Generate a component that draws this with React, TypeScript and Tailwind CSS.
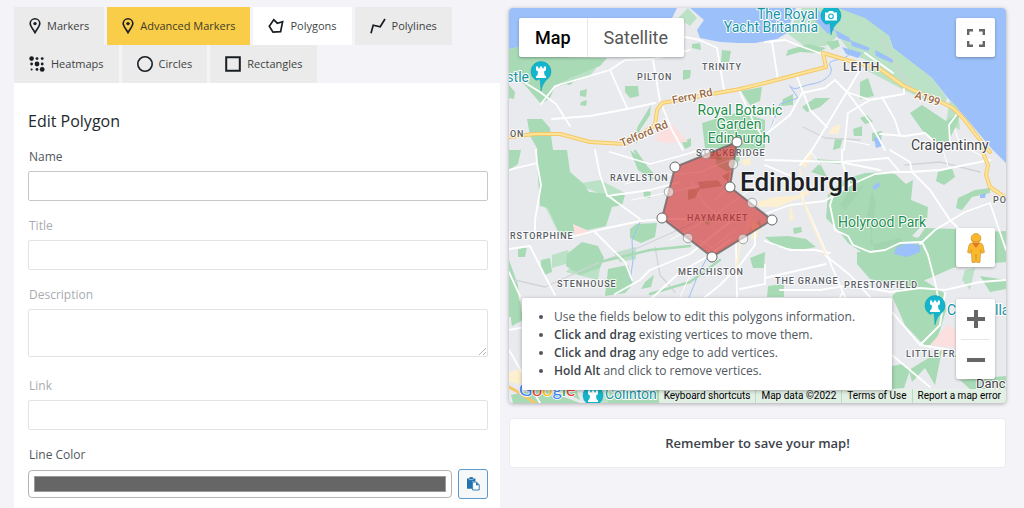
import { useState, type ReactNode } from "react";

const line = { fill: "none", stroke: "currentColor", strokeWidth: 1.6 } as const;

const PinIcon = () => (
  <svg className="h-4 w-3 shrink-0" viewBox="0 0 12 16" {...line}>
    <path d="M6 14.6C4.6 11.6 1.2 8.6 1.2 5.6a4.8 4.8 0 0 1 9.6 0c0 3-3.4 6-4.8 9z" />
    <circle cx="6" cy="5.6" r="1.7" fill="currentColor" stroke="none" />
  </svg>
);

const PolygonIcon = () => (
  <svg className="h-4 w-4 shrink-0" viewBox="0 0 16 16" {...line} strokeWidth={1.7}>
    <path d="M5.7 1.7 9.3 5.2 14.6 3.6 12.6 13.6 5 14.2 1.3 8.2z" />
  </svg>
);

const PolylineIcon = () => (
  <svg className="h-4 w-4 shrink-0" viewBox="0 0 16 16" {...line} strokeWidth={1.7}>
    <path d="M1 15.2 3.2 7.2 10.2 8.8 15 1" />
  </svg>
);

const HeatmapIcon = () => (
  <svg className="h-4 w-4 shrink-0" viewBox="0 0 16 16" fill="currentColor">
    <circle cx="2.6" cy="2.6" r="2.3" />
    <circle cx="8" cy="2.6" r="1.4" />
    <circle cx="13.2" cy="2.6" r="1.4" />
    <circle cx="2.6" cy="8" r="1.4" />
    <circle cx="8" cy="8" r="2.4" />
    <circle cx="13.2" cy="8" r="1.4" />
    <circle cx="2.6" cy="13.4" r="1" />
    <circle cx="8" cy="13.4" r="1.4" />
    <circle cx="13.2" cy="13.4" r="2.4" />
  </svg>
);

const CircleIcon = () => (
  <svg className="h-4 w-4 shrink-0" viewBox="0 0 16 16" {...line}>
    <circle cx="8" cy="8" r="7.2" />
  </svg>
);

const SquareIcon = () => (
  <svg className="h-4 w-4 shrink-0" viewBox="0 0 16 16" {...line} strokeWidth={2}>
    <path d="M1.2 1.2h13.6v13.6H1.2z" />
  </svg>
);

const tabs: { name: string; icon: ReactNode }[] = [
  { name: "Markers", icon: <PinIcon /> },
  { name: "Advanced Markers", icon: <PinIcon /> },
  { name: "Polygons", icon: <PolygonIcon /> },
  { name: "Polylines", icon: <PolylineIcon /> },
  { name: "Heatmaps", icon: <HeatmapIcon /> },
  { name: "Circles", icon: <CircleIcon /> },
  { name: "Rectangles", icon: <SquareIcon /> },
];

function Tabs() {
  const [active, setActive] = useState("Polygons");
  return (
    <nav className="flex flex-wrap gap-x-[3px]">
      {tabs.map((t) => {
        const tone =
          t.name === active
            ? "bg-white"
            : t.name === "Advanced Markers"
              ? "bg-[#facd48]"
              : "bg-[#ebebeb]";
        return (
          <button
            key={t.name}
            type="button"
            onClick={() => setActive(t.name)}
            className={`flex h-[38px] items-center gap-[6px] px-[15px] text-[11px] text-[#191e23] ${tone}`}
          >
            {t.icon}
            <span className="opacity-85">{t.name}</span>
          </button>
        );
      })}
    </nav>
  );
}

function Field({ id, label, muted, children }: { id: string; label: string; muted?: boolean; children: ReactNode }) {
  return (
    <div className={`flex flex-col gap-1 ${muted ? "opacity-50" : ""}`}>
      <label htmlFor={id} className="px-px text-xs leading-5 text-[#50575e]">
        {label}
      </label>
      {children}
    </div>
  );
}

const box = "w-full rounded-xs border border-[#c6c8ca] bg-white px-2 text-xs text-[#2c3338] outline-none";

function Form() {
  const [color, setColor] = useState("#666666");
  return (
    <form className="flex-1 bg-white pt-6 pr-3 pb-3 pl-[14px]">
      <h2 className="text-base leading-7 font-medium text-[#23282d]">Edit Polygon</h2>
      <div className="flex flex-col gap-[15px] pt-3">
        <Field id="name" label="Name">
          <input id="name" type="text" className={`${box} h-[30px]`} />
        </Field>
        <Field id="title" label="Title" muted>
          <input id="title" type="text" className={`${box} h-[30px]`} />
        </Field>
        <Field id="description" label="Description" muted>
          <textarea id="description" className={`${box} mb-1 h-12 resize-y`} />
        </Field>
        <Field id="link" label="Link" muted>
          <input id="link" type="text" className={`${box} h-[30px]`} />
        </Field>
        <Field id="color" label="Line Color">
          <div className="flex items-center gap-[6px]">
            <input
              id="color"
              type="color"
              value={color}
              onChange={(e) => setColor(e.target.value)}
              className="h-7 min-w-0 flex-1 rounded-sm border border-[#b4b4b6] bg-white p-[5px] [&::-webkit-color-swatch]:rounded-none [&::-webkit-color-swatch]:border-[#9a9a9a] [&::-webkit-color-swatch-wrapper]:p-0"
            />
            <button
              type="button"
              aria-label="Paste"
              className="flex size-[30px] items-center justify-center rounded-[3px] border border-[#5b9bd0] bg-[#f6f7f7]"
            >
              <svg className="size-[14px]" viewBox="0 0 14 14">
                <path d="M1 1.4h2.2a2 1.4 0 0 1 4 0h2.2v3H6v7.4H1z" fill="#2271b1" />
                <path d="M3 2.6h4.2" stroke="#b9d4ea" strokeWidth=".8" />
                <path d="M6.6 5h3.8L13.2 7.8V13H6.6z" fill="#fff" stroke="#2271b1" strokeWidth=".9" />
                <path d="M10 5v3.2h3.2z" fill="#2271b1" />
              </svg>
            </button>
          </div>
        </Field>
      </div>
    </form>
  );
}

const greens = [
  "M509 49 530 44 560 57 607 58 600 66 570 78 555 86 550 98 541 104 524 84 509 76z",
  "M561 83 575 80 570 85z M580 91 587 89 586 97 580 96z M581 102 587 100 586 106 580 105z",
  "M625 86 638 86 639 96 630 98 625 92z M683 70 691 70 690 78 683 80z M692 44 700 43 701 50 692 48z",
  "M722 50 731 51 729 62 721 62z M741 91 762 87 760 101 750 105z",
  "M509 85 515 92 514 99 509 98z M527 119 542 119 550 128 553 150 538 150 530 136z",
  "M651 105 650 115 640 130 637 143 632 142 638 126z M682 142 691 138 691 146 685 149z",
  "M702 123 725 116 740 112 765 120 765 150 705 148z",
  "M509 150 521 150 518 164 509 170z",
  "M536 150 567 150 570 172 584 184 589 192 625 195 622 205 612 207 606 226 575 233 560 235 548 208 540 206z",
  "M630 150 640 158 655 175 653 180 638 170z M643 190 651 192 650 198 644 197z",
  "M567 254 582 242 598 246 604 258 600 268 580 275 566 266z M518 249 527 247 525 257 518 257z",
  "M541 260 550 258 552 272 545 275 541 269z M636 224 657 223 655 237 641 243 630 238 630 229z",
  "M608 269 628 265 633 284 625 293 605 296z M645 282 654 275 651 287 641 289z M509 260 518 285 520 315 509 317z",
  "M860 82 868 78 874 96 860 99z M783 99 793 94 793 105 781 106z M802 107 815 98 830 98 820 107 807 112z",
  "M853 129 862 126 862 136 854 136z M860 118 867 115 873 122 865 124z M872 133 882 131 881 143 872 141z M835 139 843 138 840 148 833 150z",
  "M910 113 922 105 946 121 960 112 957 124 948 142 935 142 922 130z",
  "M828 194 845 179 865 173 885 172 895 174 906 184 913 180 911 200 928 207 927 220 912 236 922 240 914 248 890 258 870 258 848 243 838 230 826 218z",
  "M857 252 880 252 900 243 919 237 925 228 956 229 985 232 1006 231 1006 262 955 267 930 278 912 285 888 283 870 279 857 264z",
  "M765 237 788 236 806 239 816 247 800 250 775 246z M793 228 801 227 802 232 794 234z",
  "M938 172 952 168 955 177 944 185 936 181z M956 208 958 198 975 190 990 188 990 193 972 197 962 210z M980 276 1006 280 1006 289 990 292z",
  "M811 172 820 163 827 177z M816 159 842 161 842 164 815 162z",
  "M750 258 765 252 764 268 753 268z M768 286 784 284 784 297 767 297z",
  "M892 296 904 285 922 279 944 293 946 310 940 330 935 345 924 345 905 325z M909 370 930 357 942 350 935 385 925 368 912 382z M892 366 903 364 910 370 904 388 892 389z",
  "M960 380 1006 376 1006 403 985 403z M509 306 520 300 523 320 512 326z",
  "M511 395 540 388 580 403 513 403z M560 390 575 386 580 400z M610 390 660 385 662 403 608 403z M662 388 1006 390 1006 403 662 403z",
  "M716 152 737 148 740 160 728 172 716 165z M748 231 760 220 761 226z M700 217 712 219 708 226z",
  "M788 50 808 44 826 48 818 53 800 52 786 56z M826 42 838 40 840 46 832 50z",
];

const lightGreens = [
  "M787 33 802 8 838 8 865 18 889 36 893 48 932 78 947 98 945 104 925 100 900 88 866 70 880 66 852 54 838 36 826 46 804 46z",
  "M576 184 600 180 625 193 606 196z M540 198 556 190 575 232 560 236 548 212z M578 259 600 268 598 280 566 272z",
  "M552 255 568 250 572 262 552 268z M614 253 636 247 636 259 620 262z",
  "M918 240 955 232 955 268 935 266 918 256z M965 270 975 268 970 290 962 280z M904 300 924 292 944 308 940 330 926 346 912 331z",
  "M678 18 688 8 697 18 690 26z M573 70 584 62 602 60 590 76 560 86z",
  "M950 100 958 108 960 130 946 122z M600 384 625 384 640 403 600 403z",
];

const waters = [
  "M509 8H677L672 18 620 40 540 44 509 49z",
  "M690 8H796L790 24 787 33 777 39 755 43 738 43 720 42 700 38 697 30 704 20z",
  "M836 8H1006V163L992 149 965 117 947 97 932 78 893 48 889 36 865 19z",
  "M811 16 818 10 835 30 828 34z M835 30 850 38 850 42 838 38z M850 40 870 48 868 51 852 46z M875 50 894 60 892 63 876 56z M842 47 862 53 858 58 846 54z",
  "M896 247 905 243 920 245 920 252 907 257 894 254z M872 187 879 182 880 186 874 190z M874 138 880 136 882 146 876 148z M980 195 986 193 985 198 980 198z M625 60 630 59 630 61z",
];

const roads = [
  "M519 79 540 92 556 104 570 126 M541 104 555 86 610 70 625 60 653 59 690 50 M610 70 627 108 M552 119 590 116 627 109 655 103",
  "M653 60 660 101 672 130 683 150 M685 37 700 40 717 48 724 90 M739 90 755 125 765 140",
  "M765 42 785 40 800 46 822 54 M772 42 778 80 M797 77 810 110 827 127 M835 80 847 92 870 100 904 94 904 86 M893 73 865 53",
  "M860 70 845 95 830 120 812 150 800 165 M835 80 825 88 802 93 790 115 765 135 M847 92 870 122 885 150 M870 100 848 113 844 150",
  "M882 97 895 120 900 136 M880 134 905 136 925 133 935 142 M957 114 949 125 950 143",
  "M509 170 537 163 536 150 M537 163 541 185 535 220 535 238 M509 249 530 246 545 276 555 295 M509 237 545 238 575 236 603 229 640 221 665 219 700 219",
  "M595 150 600 175 607 195 640 219 M607 196 650 190 680 182 M595 232 625 262 632 280 M610 152 650 164 680 156 700 150",
  "M615 294 640 280 650 270 690 254 707 240 730 222 M650 300 680 272 705 258 730 240 M509 272 520 296",
  "M755 230 755 245 740 265 720 285 705 297 M736 243 737 297 M740 289 765 284 765 265",
  "M765 165 800 180 803 200 812 220 830 262 845 297 M765 214 790 205 825 201 850 185 842 162 888 158",
  "M842 162 842 150 M888 158 900 172 M765 160 840 162 880 170 M765 241 790 250 815 250 830 253 M825 255 850 275 870 297",
  "M895 172 875 174 850 185 835 190 830 205 835 230 848 236 853 245 870 252 885 250 900 243 922 242 928 255 M890 150 910 162 912 172 930 190 950 220 970 240 990 265 M910 172 940 170 990 160",
  "M912 172 895 172 M920 244 935 230 965 212 990 203 M928 255 935 282 938 297 M780 290 820 290 850 285 890 292 920 288 945 290 980 282 1006 280 M765 278 826 264",
  "M945 293 940 325 920 345 M892 312 920 345 950 350 M892 355 930 387 M509 330 525 327 M509 350 540 403 M842 293 835 310 M990 203 1006 250",
];

const thinRoads = [
  "M625 184 655 176 700 172 735 158 M632 200 680 190 720 180 M670 240 715 215 750 190 760 180",
  "M700 240 712 248 735 230 M715 200 728 188 M690 180 705 205 725 220 M765 105 775 120 770 130",
  "M810 150 820 165 M845 140 870 145 M955 130 960 145 990 160 M948 166 943 150 M690 275 680 297",
];

const highways = [
  "M509 137 535 134 560 134 590 142 625 144 640 135 655 125 657 110 662 103 690 98 740 89 765 83 826 67 823 53 850 61 880 69 904 86 945 104 953 108 963 118 980 140 990 152",
  "M982 150 988 165 986 175 990 187 1006 198",
];

type Label = [text: string, x: number, y: number];

const districts: Label[] = [
  ["PILTON", 637, 80],
  ["TRINITY", 702, 70],
  ["RAVELSTON", 610, 181],
  ["RSTORPHINE", 510, 239],
  ["STENHOUSE", 557, 287],
  ["MERCHISTON", 678, 275],
  ["STOCKBRIDGE", 696, 156],
  ["HAYMARKET", 687, 221],
  ["THE GRANGE", 775, 284],
  ["PRESTONFIELD", 844, 288],
  ["LITTLE FRA", 906, 357],
  ["ON", 510, 137],
  ["PO", 993, 203],
];

const outer: [number, number][] = [
  [737, 142],
  [675, 167],
  [662, 218],
  [712, 257],
  [772, 220],
  [730, 187],
];
const middle: [number, number][] = [
  [706, 154],
  [669, 192],
  [688, 238],
  [743, 239],
  [752, 203],
  [733, 164],
];

function Poi({ x, y, castle }: { x: number; y: number; castle?: boolean }) {
  return (
    <g transform={`translate(${x} ${y})`}>
      <path d="M0 19C-1-1-2 11-6 7.500A10 10 0 1 1 6 7.500C2 11 1 15 0 19z" fill="#12b5cb" stroke="#0e9bb0" strokeWidth=".5" />
      {castle ? (
        <path d="M-5-5.500h2.200v1.800h1.600v-1.800h2.400v1.800h1.600v-1.800H5v3.800L3-.5l.5 3.500L5 4.500V6H-5V4.500L-3.500 3-3-.5-5-1.700z" fill="#fff" />
      ) : (
        <>
          <path d="M-6-3.500h3L-2-5h4l1 1.500h3v8H-6z" fill="#fff" />
          <circle r="2.300" cy=".3" fill="none" stroke="#12b5cb" strokeWidth="1.200" />
        </>
      )}
    </g>
  );
}

function MapDrawing() {
  return (
    <svg
      className="absolute inset-0 h-full w-full font-[Roboto,sans-serif]"
      viewBox="509 8 497 395"
      preserveAspectRatio="xMidYMid slice"
    >
      <path d="M509 8h497v395H509z" fill="#e8eaed" />
      {waters.slice(0, 3).map((d) => (
        <path key={d} d={d} fill="#9cc0f9" />
      ))}
      {lightGreens.map((d) => (
        <path key={d} d={d} fill="#bbe2c6" />
      ))}
      {greens.map((d) => (
        <path key={d} d={d} fill="#a8dab5" />
      ))}
      {waters.slice(3).map((d) => (
        <path key={d} d={d} fill="#9cc0f9" />
      ))}
      <path d="M660 130 672 124 688 142 665 143 655 140z M573 224 589 231 587 235 575 236z M948 324 958 332 956 348 930 345z" fill="#fbe0df" />
      <path d="M742 160 750 158 751 164 744 166z M757 202 775 197 796 196 806 190 810 194 790 202 778 207 760 207z M790 203 794 220 789 221z M801 165 808 152 813 154 805 168z M833 127 841 124 838 134 828 134z M752 220 760 226 757 238 751 240z M509 372 524 368 524 385 509 382z" fill="#fdf0d0" />
      <path d="M867 215 872 190 876 205 870 245 900 238 905 246 875 252z M840 205 850 190 865 185 845 210z" fill="#9ccfa9" opacity=".5" />
      <g fill="none" strokeLinecap="round" strokeLinejoin="round">
        <path d="M790 86C795 92 800 86 812 84S835 74 830 66 850 62 852 50 M790 86 798 98 780 104 770 130" stroke="#9cc0f9" strokeWidth="1" />
        <path d="M700 270 688 300 M640 222 632 240 633 260 630 282 M707 258 695 280" stroke="#9cc0f9" strokeWidth="1" />
        <path d="M515 280 545 287 600 262 640 247 700 220 730 213 M655 247 660 275 675 292 M880 37 900 72 912 88 M905 165 940 162 980 172 M803 127 825 138 860 140" stroke="#d2d4d8" strokeWidth="1.300" />
        <path d="M635 151 645 165 M600 262 650 250 690 246 M650 294 690 282 720 260" stroke="#a8dab5" strokeWidth="2.500" />
        {thinRoads.map((d) => (
          <path key={d} d={d} stroke="#fff" strokeWidth="1" />
        ))}
        {roads.map((d) => (
          <path key={d} d={d} stroke="#fff" strokeWidth="1.800" />
        ))}
        <path d="M736 270 740 244 752 215 M800 170 802 198 815 230 826 255" stroke="#fdf1d2" strokeWidth="2" />
        {highways.map((d) => (
          <path key={d} d={d} stroke="#f6c766" strokeWidth="4" />
        ))}
        {highways.map((d) => (
          <path key={d} d={d} stroke="#fde49b" strokeWidth="2.200" />
        ))}
        <path d="M509 387 520 393 535 403" stroke="#f6c766" strokeWidth="3" />
      </g>

      <g stroke="#fff" strokeWidth="2" strokeLinejoin="round" className="[&_text]:[paint-order:stroke]">
        <g fill="#5b6066" fontSize="9" fontWeight="500" letterSpacing=".9" strokeOpacity=".8">
          {districts.map(([text, x, y]) => (
            <text key={text} x={x} y={y}>
              {text}
            </text>
          ))}
        </g>
        <text x="843" y="71" fontSize="12" fontWeight="500" letterSpacing="1" fill="#4a4e53">LEITH</text>
        <g fill="#9a6a45" fontSize="11" fontWeight="500">
          <text transform="translate(673 104) rotate(-12)">Ferry Rd</text>
          <text transform="translate(622 147) rotate(-23)">Telford Rd</text>
          <text transform="translate(914 98) rotate(18)">A199</text>
        </g>
        <g fill="#1e8e4e" fontSize="14">
          <text x="740" y="115" textAnchor="middle">Royal Botanic</text>
          <text x="739" y="129" textAnchor="middle">Garden</text>
          <text x="739" y="143" textAnchor="middle">Edinburgh</text>
          <text x="838" y="227">Holyrood Park</text>
        </g>
        <g fill="#1793a5" fontSize="14">
          <text x="818" y="19" textAnchor="end">The Royal</text>
          <text x="818" y="32" textAnchor="end">Yacht Britannia</text>
          <text x="529" y="82" textAnchor="end">stle</text>
          <text x="947" y="315">C</text>
          <text x="995" y="315">lla</text>
          <text x="605" y="399">Colinton</text>
        </g>
        <g fill="#3f4347" fontSize="14">
          <text x="911" y="150">Craigentinny</text>
          <text x="976" y="388" fontSize="13">Danc</text>
        </g>
      </g>
      <Poi x={541} y={72} castle />
      <Poi x={831} y={16} />
      <Poi x={935} y={306} castle />
      <Poi x={593} y={396} castle />

      <polygon points={outer.map((p) => p.join(",")).join(" ")} fill="#d32f2f" fillOpacity=".63" stroke="#666" strokeOpacity=".75" strokeWidth="2" />
      <path d="M705 153 718 152 722 160 706 158z M698 182 718 180 722 186 700 189z M688 190 700 188 695 198 688 200z M722 176 730 172 728 182z" fill="#a84d38" opacity=".4" />
      {middle.map(([x, y]) => (
        <circle key={`${x}-${y}`} cx={x} cy={y} r="4.800" fill="#fff" fillOpacity=".55" stroke="#777" strokeOpacity=".6" />
      ))}
      {outer.map(([x, y]) => (
        <circle key={`${x}-${y}`} cx={x} cy={y} r="5" fill="#fff" stroke="#666" />
      ))}
      <text x="740" y="191" fontSize="26" fontWeight="500" fill="#202124" stroke="#fff" strokeWidth="2" strokeOpacity=".7" className="[paint-order:stroke]">
        Edinburgh
      </text>
      <text x="519" y="396" fontSize="18" stroke="#fff" strokeWidth="1.500" className="font-[Lato,sans-serif] [paint-order:stroke]">
        <tspan fill="#4285f4">G</tspan>
        <tspan fill="#ea4335">o</tspan>
        <tspan fill="#fbbc04">o</tspan>
        <tspan fill="#4285f4">g</tspan>
        <tspan fill="#34a853">l</tspan>
        <tspan fill="#ea4335">e</tspan>
      </text>
    </svg>
  );
}

const card = "rounded-xs bg-white shadow-[0_1px_3px_rgba(0,0,0,0.3)]";

function MapPanel() {
  return (
    <section className="relative h-[395px] overflow-hidden rounded-sm font-[Roboto,sans-serif] shadow-[0_1px_4px_rgba(0,0,0,0.3)]">
      <MapDrawing />

      <div className={`absolute top-[10px] left-[10px] flex h-[39px] text-lg ${card}`}>
        <button type="button" className="border-r border-[#e6e6e6] px-4 font-medium text-black">
          Map
        </button>
        <button type="button" className="px-4 text-[#565656]">
          Satellite
        </button>
      </div>

      <div className="absolute top-[10px] right-[11px]">
        <button type="button" aria-label="Toggle fullscreen view" className={`flex size-[39px] items-center justify-center ${card}`}>
          <svg className="size-[18px]" viewBox="0 0 18 18" fill="none" stroke="#666" strokeWidth="2.400">
            <path d="M1.200 6V1.200H6M12 1.200h4.800V6M16.800 12v4.800H12M6 16.800H1.200V12" />
          </svg>
        </button>
      </div>

      <div className="absolute right-[11px] bottom-6 flex flex-col gap-8">
        <button type="button" aria-label="Street View" className={`flex size-[39px] items-center justify-center ${card}`}>
          <svg className="h-[30px] w-[18px]" viewBox="0 0 18 30" stroke="#c8871c" strokeWidth=".6">
            <path d="M5 10h8c2 0 2.800 1.400 3.200 3.200l1.200 6-2.600 1.200-1.200-3.400-.6 12.400H9.600L9 21l-.6 8.400H5L4.400 17l-1.200 3.400-2.600-1.200 1.200-6C2.200 11.400 3 10 5 10z" fill="#fbb82c" />
            <path d="M5.400 10h7.200L9 15z" fill="#e0752d" stroke="none" />
            <circle cx="9" cy="5.400" r="4.900" fill="#fbb82c" />
            <path d="M5 7.800a6 3.600 0 0 0 8 0" fill="none" stroke="#d0811f" />
          </svg>
        </button>
        <div className={`flex flex-col items-center ${card}`}>
          <button type="button" aria-label="Zoom in" className="flex h-10 w-[39px] items-center justify-center">
            <svg className="size-[18px]" viewBox="0 0 18 18" fill="none" stroke="#666" strokeWidth="4">
              <path d="M0 9h18M9 0v18" />
            </svg>
          </button>
          <span className="h-px w-[29px] bg-[#e6e6e6]" />
          <button type="button" aria-label="Zoom out" className="flex h-[39px] w-[39px] items-center justify-center">
            <svg className="size-[18px]" viewBox="0 0 18 18" fill="none" stroke="#666" strokeWidth="4">
              <path d="M0 9h18" />
            </svg>
          </button>
        </div>
      </div>

      <div className="absolute right-0 bottom-0 flex h-[14px] items-center divide-x divide-[#b9dcc3] bg-[#f5f5f5]/75 text-[10px] leading-[14px] whitespace-nowrap text-black">
        <button type="button" className="px-[5px]">Keyboard shortcuts</button>
        <span className="px-[5px]">Map data ©2022</span>
        <a href="#terms" className="px-[5px]">Terms of Use</a>
        <a href="#report" className="px-[5px]">Report a map error</a>
      </div>

      <ul className="absolute bottom-[13px] left-[13px] w-[370px] list-disc rounded-xs bg-white py-[10px] pr-3 pl-8 font-['Open_Sans',sans-serif] text-xs leading-[18px] text-[#50575e] shadow-[0_1px_4px_rgba(0,0,0,0.3)] [&_b]:font-semibold [&_b]:text-[#3c434a]">
        <li>Use the fields below to edit this polygons information.</li>
        <li><b>Click and drag</b> existing vertices to move them.</li>
        <li><b>Click and drag</b> any edge to add vertices.</li>
        <li><b>Hold Alt</b> and click to remove vertices.</li>
      </ul>
    </section>
  );
}

export default function App() {
  return (
    <main className="grid min-h-screen grid-cols-[486fr_497fr] gap-[9px] bg-[#f3f3f8] pt-[7px] pr-[18px] pl-[14px] font-['Open_Sans',sans-serif]">
      <div className="flex flex-col">
        <Tabs />
        <Form />
      </div>
      <div className="flex flex-col gap-[15px] pt-px">
        <MapPanel />
        <p className="rounded-sm border border-[#ececf0] bg-white py-[14px] text-center text-[13px] leading-5 font-semibold text-[#3c434a]">
          Remember to save your map!
        </p>
      </div>
    </main>
  );
}
